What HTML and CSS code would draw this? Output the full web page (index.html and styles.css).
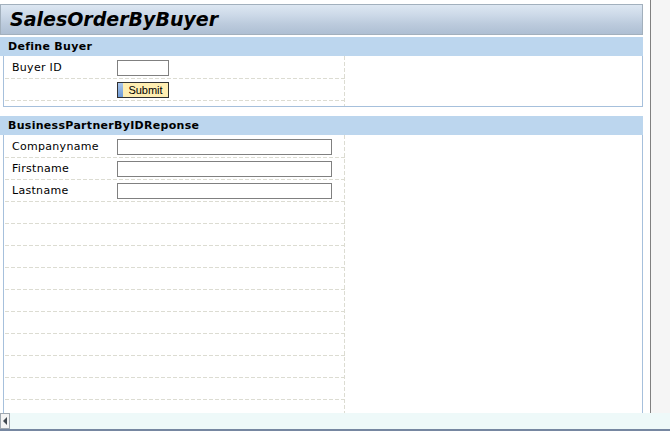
FILE: index.html
```html
<!DOCTYPE html>
<html lang="en">
<head>
  <meta charset="UTF-8"/>
  <title>SalesOrderByBuyer</title>
  <link rel="stylesheet" href="styles.css">
</head>
<body>

  <div class="screen">
    <div class="viewport">
      <div class="page">
        <h1 class="title">SalesOrderByBuyer</h1>

        <div class="section first">
          <div class="section-head">Define Buyer</div>
          <div class="section-body">
            <div class="form">
              <div class="row">
                <div class="label">Buyer ID</div>
                <div class="field"><input class="input short" type="text"></div>
              </div>
              <div class="row">
                <div class="label"></div>
                <div class="field"><button class="submit">Submit</button></div>
              </div>
            </div>
          </div>
        </div>

        <div class="section">
          <div class="section-head">BusinessPartnerByIDReponse</div>
          <div class="section-body">
            <div class="form">
              <div class="row">
                <div class="label">Companyname</div>
                <div class="field"><input class="input long" type="text"></div>
              </div>
              <div class="row">
                <div class="label">Firstname</div>
                <div class="field"><input class="input long" type="text"></div>
              </div>
              <div class="row">
                <div class="label">Lastname</div>
                <div class="field"><input class="input long" type="text"></div>
              </div>
              <!-- empty rows of the result table -->
              <div class="row"></div>
              <div class="row"></div>
              <div class="row"></div>
              <div class="row"></div>
              <div class="row"></div>
              <div class="row"></div>
              <div class="row"></div>
              <div class="row"></div>
              <div class="row"></div>
              <div class="row"></div>
              <div class="row"></div>
            </div>
          </div>
        </div>
      </div>
      <div class="vbar"></div>
    </div>
    <div class="hscroll">
      <div class="arrow"></div>
    </div>
  </div>

</body>
</html>
```

FILE: styles.css
```css
body {
  margin: 0;
  font-family: "DejaVu Sans", Verdana, sans-serif;
  font-size: 11px;
  letter-spacing: 0.3px;
  color: #000;
  overflow: hidden;
}

.screen {
  width: 670px;
  height: 431px;
  display: flex;
  flex-direction: column;
}

.viewport {
  height: 413px;
  display: flex;
}

.page {
  width: 650px;
  background: #fff;
  padding-top: 4px;
  overflow: hidden;
}

.vbar {
  flex: 1;
  background: #f5f5f5;
  border-left: 1px solid #808080;
}

.title {
  box-sizing: border-box;
  width: 643px;
  height: 31px;
  margin: 0 0 2px 0;
  padding-left: 9px;
  border: 1px solid #a2b0bd;
  background: linear-gradient(#dde7f2, #ccd9e8 35%, #bccbdd 65%, #aebfd3);
  font-size: 19px;
  font-style: italic;
  font-weight: bold;
  letter-spacing: 0;
  line-height: 29px;
  color: #000;
}

.section.first {
  margin-bottom: 9px;
}

.section-head {
  width: 643px;
  height: 19px;
  box-sizing: border-box;
  padding-left: 8px;
  background: #bcd6ee;
  font-weight: bold;
  line-height: 19px;
}

.section-body {
  box-sizing: border-box;
  width: 640px;
  margin-left: 3px;
  border-left: 1px solid #a6c0dc;
  border-right: 1px solid #a6c0dc;
}

.first .section-body {
  border-bottom: 1px solid #a6c0dc;
}

.form {
  width: 341px;
  padding: 1px 0 5px 0;
  background: linear-gradient(to bottom, #dcdcd2 4px, transparent 4px) right top / 1px 6px repeat-y;
}

.row {
  display: flex;
  align-items: center;
  height: 22px;
  box-sizing: border-box;
  padding-bottom: 1px;
  background: linear-gradient(to right, #dcdcd2 4px, transparent 4px) 1px bottom / 6px 1px repeat-x;
}

.label {
  width: 105px;
  padding-left: 8px;
  flex-shrink: 0;
}

.field {
  display: flex;
  align-items: center;
}

.input {
  box-sizing: border-box;
  height: 16px;
  margin: 0;
  border: 1px solid #808080;
  background: #fff;
}

.input.short {
  width: 52px;
}

.input.long {
  width: 215px;
}

.submit {
  box-sizing: border-box;
  width: 52px;
  height: 16px;
  margin: 0;
  padding: 0 0 0 5px;
  border: 1px solid #303030;
  background: linear-gradient(#a9c6ec, #6f9bd6) left top / 5px 100% no-repeat, #ffeeb2;
  font-family: "Liberation Sans", Arial, sans-serif;
  font-size: 11px;
  letter-spacing: 0;
  line-height: 14px;
  color: #000;
}

.hscroll {
  height: 16px;
  border-bottom: 2px solid #7687a1;
  background: #eef9f9;
  display: flex;
  align-items: center;
}

.arrow {
  box-sizing: border-box;
  width: 10px;
  height: 16px;
  border: 1px solid #a0a8b0;
  background: #f4f4f4;
  position: relative;
}

.arrow::after {
  content: "";
  position: absolute;
  left: 2px;
  top: 3px;
  border-top: 4px solid transparent;
  border-bottom: 4px solid transparent;
  border-right: 4px solid #404850;
}
```
